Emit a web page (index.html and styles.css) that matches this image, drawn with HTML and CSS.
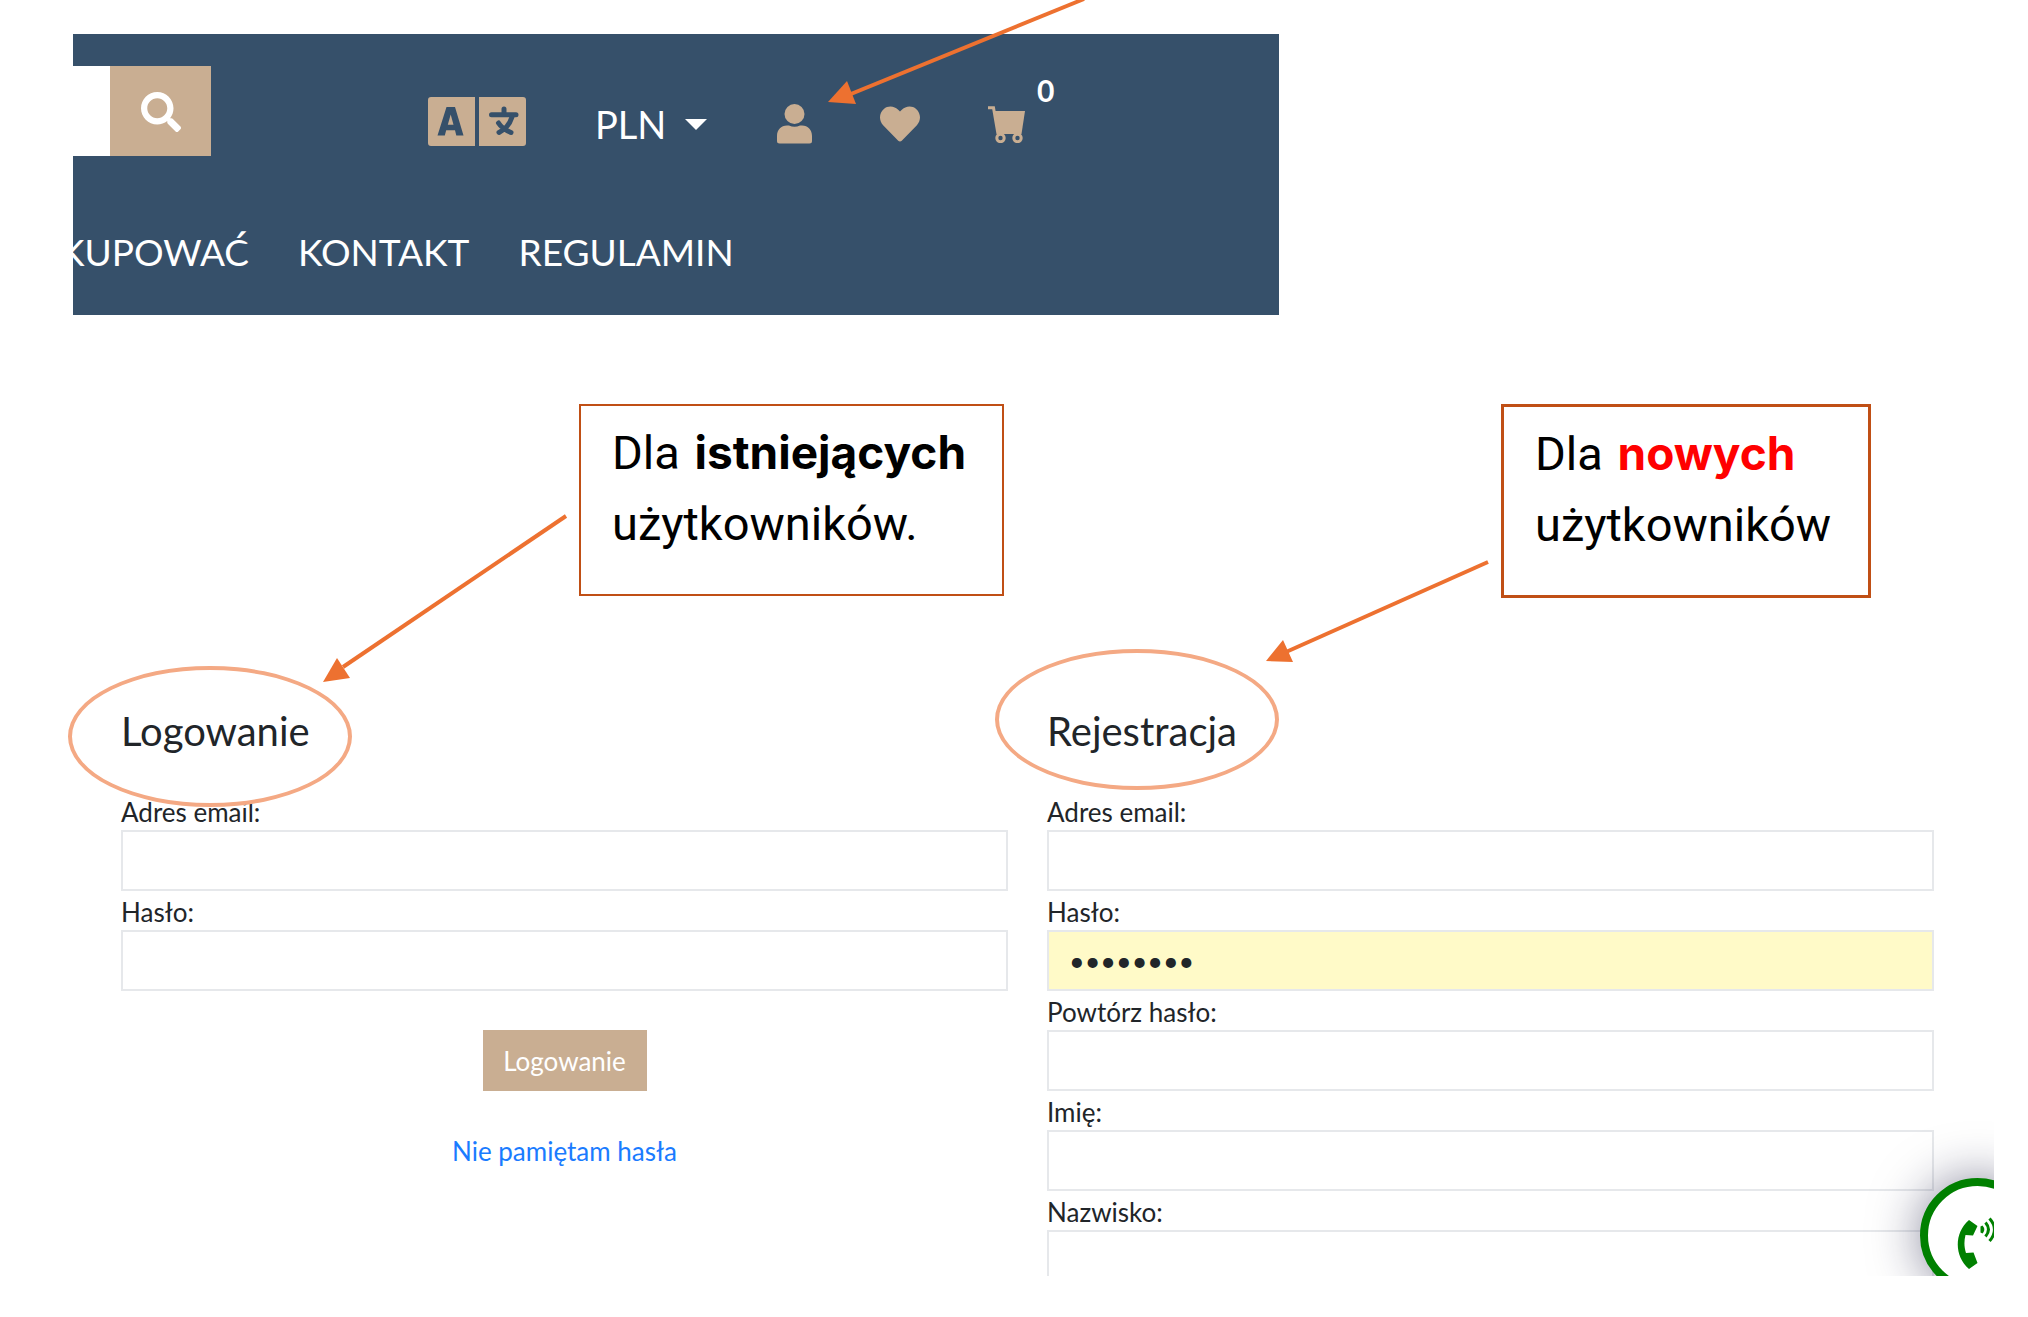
FILE: index.html
```html
<!DOCTYPE html>
<html lang="pl">
<head>
<meta charset="utf-8">
<meta name="viewport" content="width=device-width, initial-scale=1">
<title>Logowanie i rejestracja</title>
<link rel="stylesheet" href="styles.css">
</head>
<body>
<div class="page">
  <header class="shop-header">
    <div class="toolbar">
      <form class="search">
        <input class="search-input" type="text" aria-label="Szukaj">
        <button class="search-button" type="button" aria-label="Szukaj">
          <svg class="icon-search" viewBox="0 0 512 512" fill="currentColor"><path d="M505 442.700 405.300 343c-4.500-4.500-10.600-7-17-7H372c27.600-35.300 44-79.700 44-128C416 93.100 322.900 0 208 0S0 93.100 0 208s93.100 208 208 208c48.300 0 92.700-16.400 128-44v16.300c0 6.400 2.500 12.500 7 17l99.700 99.700c9.400 9.400 24.600 9.400 33.900 0l28.300-28.300c9.400-9.400 9.400-24.600.1-34zM208 336c-70.700 0-128-57.200-128-128 0-70.700 57.200-128 128-128 70.700 0 128 57.200 128 128 0 70.700-57.200 128-128 128z"/></svg>
        </button>
      </form>
      <div class="tools">
        <button class="tool language" type="button" aria-label="Język">
          <svg class="icon-language" viewBox="0 0 98 49">
            <path class="tan" d="M3 0H47V49H3a3 3 0 0 1-3-3V3a3 3 0 0 1 3-3zM51 0H95a3 3 0 0 1 3 3V46a3 3 0 0 1-3 3H51z"/>
            <path class="navy" fill-rule="evenodd" d="M18.500 10H27L35.500 38.500H28.300L27 33.200H18.200L16.800 38.500H9.500zM22.700 17.500 19.800 27.800H25.500z"/>
            <path class="navy-line" d="M76 12v5M63.500 17.800H88M84 20C81.500 28 77 32.500 71 35.500M70.500 26C73 30 78 33.500 83 35.500"/>
          </svg>
        </button>
        <div class="currency">
          <select class="currency-select" aria-label="Waluta"><option>PLN</option></select>
          <svg class="caret" viewBox="0 0 22 11" fill="currentColor"><path d="M0 0H22L11 11z"/></svg>
        </div>
        <a class="tool account" href="#logowanie" aria-label="Konto">
          <svg class="icon-user" viewBox="0 0 35 40" fill="currentColor"><circle cx="17.500" cy="10" r="10"/><path d="M10 21.500h2c3.500 1.700 7.500 1.700 11 0h2c6 0 10 4.500 10 10.500V37a2.500 2.500 0 0 1-2.500 2.500h-30A2.500 2.500 0 0 1 0 37v-5c0-6 4-10.500 10-10.500z"/></svg>
          <svg class="arrow arrow-account" viewBox="0 0 260 108"><path class="shaft" d="M18 97 256 0"/><path class="head" d="M0 103 19 82 28 105z"/></svg>
        </a>
        <a class="tool" href="#ulubione" aria-label="Ulubione">
          <svg class="icon-heart" viewBox="0 32 512 448" fill="currentColor"><path d="M462.300 62.600C407.500 15.900 326 24.300 275.700 76.200L256 96.500l-19.700-20.300C186.100 24.300 104.500 15.900 49.700 62.600c-62.800 53.600-66.100 149.800-9.900 207.900l193.500 199.800c12.500 12.900 32.800 12.900 45.300 0l193.500-199.800c56.300-58.100 53-154.300-9.800-207.900z"/></svg>
        </a>
        <a class="tool cart" href="#koszyk" aria-label="Koszyk">
          <svg class="icon-cart" viewBox="0 0 37 37"><path class="tan" d="M6 5H37L33.500 28H10z"/><path class="cart-line" d="M0 1.800H5.500L10 28"/><circle class="cart-line" cx="12.500" cy="32" r="3.700"/><circle class="cart-line" cx="29.500" cy="32" r="3.700"/></svg>
          <span class="cart-count">0</span>
        </a>
      </div>
    </div>
    <nav class="menu">
      <a href="#kupowac">KUPOWAĆ</a>
      <a href="#kontakt">KONTAKT</a>
      <a href="#regulamin">REGULAMIN</a>
    </nav>
  </header>

  <main class="content">
    <div class="columns callouts">
      <p class="callout callout-existing">Dla <strong>istniejących</strong><br>użytkowników.
        <svg class="arrow arrow-login" viewBox="0 0 246 170"><path class="shaft" d="M20 154 243 3"/><path class="head" d="M0 169 14 145 27 165z"/></svg>
      </p>
      <p class="callout callout-new">Dla <strong class="red">nowych</strong><br>użytkowników
        <svg class="arrow arrow-register" viewBox="0 0 224 104"><path class="shaft" d="M20 92 222 2"/><path class="head" d="M0 101 17 80 27 102z"/></svg>
      </p>
    </div>

    <div class="columns">
      <form class="form" id="logowanie">
        <h2 class="title title-login">Logowanie</h2>
        <label for="login-email">Adres email:</label>
        <input class="field" id="login-email" type="text">
        <label for="login-pass">Hasło:</label>
        <input class="field" id="login-pass" type="password">
        <button class="submit" type="button">Logowanie</button>
        <a class="forgot" href="#haslo">Nie pamiętam hasła</a>
      </form>
      <form class="form">
        <h2 class="title title-register">Rejestracja</h2>
        <label for="reg-email">Adres email:</label>
        <input class="field" id="reg-email" type="text">
        <label for="reg-pass">Hasło:</label>
        <input class="field filled" id="reg-pass" type="password" value="password">
        <label for="reg-pass2">Powtórz hasło:</label>
        <input class="field" id="reg-pass2" type="password">
        <label for="reg-name">Imię:</label>
        <input class="field" id="reg-name" type="text">
        <label for="reg-surname">Nazwisko:</label>
        <input class="field field-last" id="reg-surname" type="text">
      </form>
    </div>

    <div class="call-layer">
      <button class="call" type="button" aria-label="Zadzwoń">
        <svg class="icon-call" viewBox="0 0 44 54"><path class="green" d="M12 3 20.500 9 16 18.500 8.500 18C7 24 7 30 9 36L16.500 35.500 20.500 46 12 52C-3 39-3 16 12 3z"/><path class="green" d="M23.500 9.500 25.500 8.500Q29 12.500 25.500 16.500L23.500 15.500z"/><path class="wave" d="M28.500 5.500Q34.500 12.500 28.500 19.500M32.500 1.500Q42.500 12.500 32.500 24"/></svg>
      </button>
    </div>
  </main>
</div>
</body>
</html>
```
FILE: styles.css
```css
*, *::after { box-sizing: border-box; }

body {
  margin: 0;
  background: #fff;
  color: #212529;
  font-family: Lato, "Liberation Sans", sans-serif;
  font-size: 26px;
  overflow-x: hidden;
}

button, input, select { font: inherit; color: inherit; border-radius: 0; }
button { border: 0; padding: 0; background: none; }
a { text-decoration: none; }
svg { display: block; }

.page { padding: 34px 34px 41px 73px; }

.tan { fill: #c9ae92; }
.navy { fill: #36506a; }
.navy-line { fill: none; stroke: #36506a; stroke-width: 5; stroke-linecap: round; }

/* Shop header */
.shop-header {
  width: 62.8%;
  padding: 32px 0 39px;
  background: #36506a;
  color: #fff;
}
.toolbar { display: flex; }
.search { display: flex; height: 90px; }
.search-input { width: 37px; border: 0; padding: 0; background: #fff; }
.search-button {
  display: grid;
  place-items: center;
  width: 101px;
  padding-top: 2px;
  background: #c9ae92;
  color: #fff;
}
.icon-search { width: 40px; height: 40px; }

.tools {
  display: flex;
  align-items: center;
  height: 60px;
  margin: 28px 0 0 217px;
}
.tool { position: relative; color: #c9ae92; }
.language { margin-bottom: 6px; }
.icon-language { width: 98px; height: 49px; }
.currency { display: grid; align-items: center; width: 112px; margin: 0 70px 0 69px; font-size: 38px; }
.currency > * { grid-area: 1 / 1; }
.currency-select {
  appearance: none;
  width: 100%;
  border: 0;
  padding: 0;
  background: none;
}
.caret { justify-self: end; width: 22px; height: 11px; pointer-events: none; }
.icon-user { width: 35px; height: 40px; }
.account { margin-right: 68px; }
.icon-heart { width: 40px; height: 36px; }
.cart { margin-left: 68px; }
.icon-cart { width: 37px; height: 37px; }
.cart-line { fill: none; stroke: #c9ae92; stroke-width: 3; }
.cart-count {
  position: absolute;
  left: 49px;
  bottom: 35px;
  color: #fff;
  font-size: 30px;
  font-weight: 700;
}

.menu {
  display: flex;
  gap: 49px;
  margin-top: 72px;
  overflow: hidden;
  font-size: 37px;
  line-height: 48px;
}
.menu a { color: #fff; }
.menu a:first-child { margin-left: -13px; }

/* Notes and arrows */
.arrow { position: absolute; overflow: visible; pointer-events: none; }
.shaft { fill: none; stroke: #ed7130; stroke-width: 4; }
.head { fill: #ed7130; }
.arrow-account { left: 51px; bottom: 37px; width: 260px; height: 108px; }
.arrow-login { right: 100%; top: 107px; width: 258px; height: 170px; padding-right: 12px; }
.arrow-register { right: 100%; top: 153px; width: 238px; height: 104px; padding-right: 14px; }

.content { position: relative; padding: 89px 60px 0 48px; }
.columns { display: grid; grid-template-columns: 1fr 1fr; gap: 39px; }
.callouts { align-items: start; }
.callout {
  position: relative;
  justify-self: end;
  margin: 0;
  padding: 11px 31px 35px;
  border: 2px solid #c04f15;
  color: #000;
  font-family: Roboto, "Liberation Sans", sans-serif;
  font-size: 47px;
  line-height: 71px;
}
.callout strong {
  margin-left: 3px;
  font-family: Inter, "Liberation Sans", sans-serif;
  font-size: 46px;
  line-height: 1;
}
.callout .red { color: #f00; }
.callout-existing { width: 425px; margin-right: 4px; }
.callout-new { width: 370px; margin-right: 63px; border-width: 3px; }

/* Forms */
.form { display: flex; flex-direction: column; padding-top: 109px; }
.title {
  position: relative;
  align-self: start;
  margin: 0 0 36px;
  font-size: 40px;
  font-weight: 400;
  line-height: 48px;
}
.title::after {
  content: "";
  position: absolute;
  width: 284px;
  height: 141px;
  border: 4px solid #f4a984;
  border-radius: 50%;
}
.title-login::after { left: -53px; top: -41px; }
.title-register::after { left: -52px; top: -58px; }

.form label { line-height: 31px; padding: 6px 0 2px; height: 39px; }
.field {
  width: 100%;
  height: 61px;
  padding: 0 20px;
  border: 2px solid #e6e8eb;
  background: #fff;
}
.filled { background: #fffac8; font-size: 27px; }
.field-last { height: 46px; border-bottom: 0; }
.submit {
  align-self: center;
  width: 164px;
  height: 61px;
  margin-top: 39px;
  background: #c9ae92;
  color: #fff;
}
.forgot { align-self: center; margin-top: 44px; color: #1a7bff; line-height: 32px; }

/* Floating call button */
.call-layer { position: absolute; inset: 0; overflow: hidden; pointer-events: none; }
.call {
  position: absolute;
  right: -41px;
  bottom: -17px;
  width: 115px;
  height: 115px;
  border: 8px solid #008000;
  border-radius: 50%;
  background: #fff;
  box-shadow: 0 0 50px rgba(20, 20, 60, 0.5);
}
.icon-call { width: 44px; height: 54px; margin: 16px 0 0 29px; }
.green { fill: #008000; }
.wave { fill: none; stroke: #008000; stroke-width: 3; }
```
